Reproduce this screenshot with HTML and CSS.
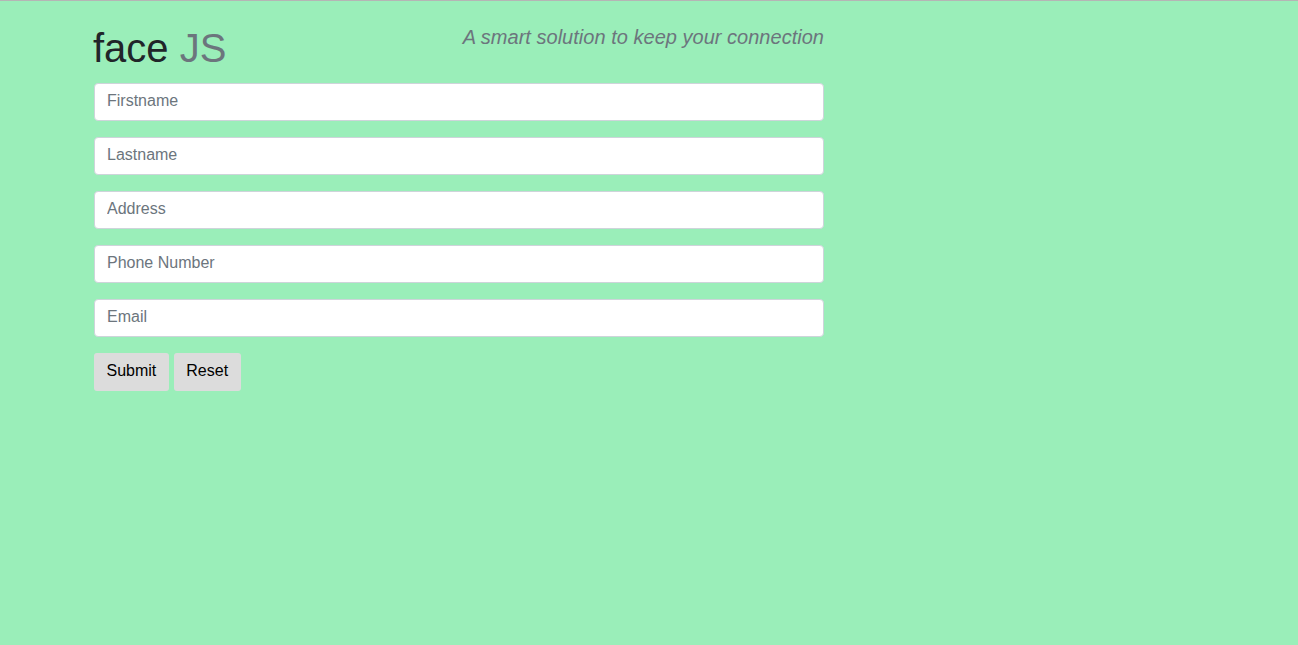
FILE: index.html
```html
<!DOCTYPE html>
<html>
<head>
<meta charset="utf-8">
<title>face JS</title>
<link rel="stylesheet" href="styles.css">
</head>
<body>
<div class="page">
  <header class="header">
    <h1 class="brand">face <span class="brand-accent">JS</span></h1>
    <p class="tagline">A smart solution to keep your connection</p>
  </header>
  <form class="form">
    <div class="field"><input class="input" type="text" placeholder="Firstname"></div>
    <div class="field"><input class="input" type="text" placeholder="Lastname"></div>
    <div class="field"><input class="input" type="text" placeholder="Address"></div>
    <div class="field"><input class="input" type="text" placeholder="Phone Number"></div>
    <div class="field"><input class="input" type="text" placeholder="Email"></div>
    <div class="actions">
      <button class="btn" type="button">Submit</button>
      <button class="btn" type="button">Reset</button>
    </div>
  </form>
</div>
</body>
</html>
```

FILE: styles.css
```css
html, body {
  margin: 0;
  padding: 0;
}
body {
  background: #9aeeb9;
  border-top: 1px solid #b5b5b5;
  min-height: 644px;
  font-family: "Liberation Sans", Arial, sans-serif;
  color: #212529;
}
.page {
  width: 730px;
  margin-left: 94px;
}
.header {
  display: flex;
  justify-content: space-between;
  align-items: flex-start;
  padding-top: 23px;
  margin-bottom: 11px;
}
.brand {
  margin: 0;
  font-size: 40px;
  font-weight: 400;
  line-height: 1.2;
  color: #212529;
  margin-left: -1px;
}
.brand-accent {
  color: #6c757d;
}
.tagline {
  margin: 1px 0 0 0;
  font-size: 20px;
  font-style: italic;
  line-height: 1.2;
  letter-spacing: 0.02px;
  color: #6c757d;
}
.field {
  margin-bottom: 16px;
}
.input {
  display: block;
  box-sizing: border-box;
  width: 730px;
  height: 38px;
  padding: 5px 12px 7px;
  font-family: "Liberation Sans", Arial, sans-serif;
  font-size: 16px;
  color: #495057;
  background: #fff;
  border: 1px solid #ced4da;
  border-radius: 4px;
  outline: none;
}
.input::placeholder {
  color: #6c757d;
  opacity: 1;
}
.actions {
  display: flex;
  gap: 5px;
}
.btn {
  box-sizing: border-box;
  height: 38px;
  padding: 0 12.5px 2px;
  font-family: "Liberation Sans", Arial, sans-serif;
  font-size: 16px;
  color: #000;
  background: #dcdcdc;
  border: none;
  border-radius: 3px;
}
```
